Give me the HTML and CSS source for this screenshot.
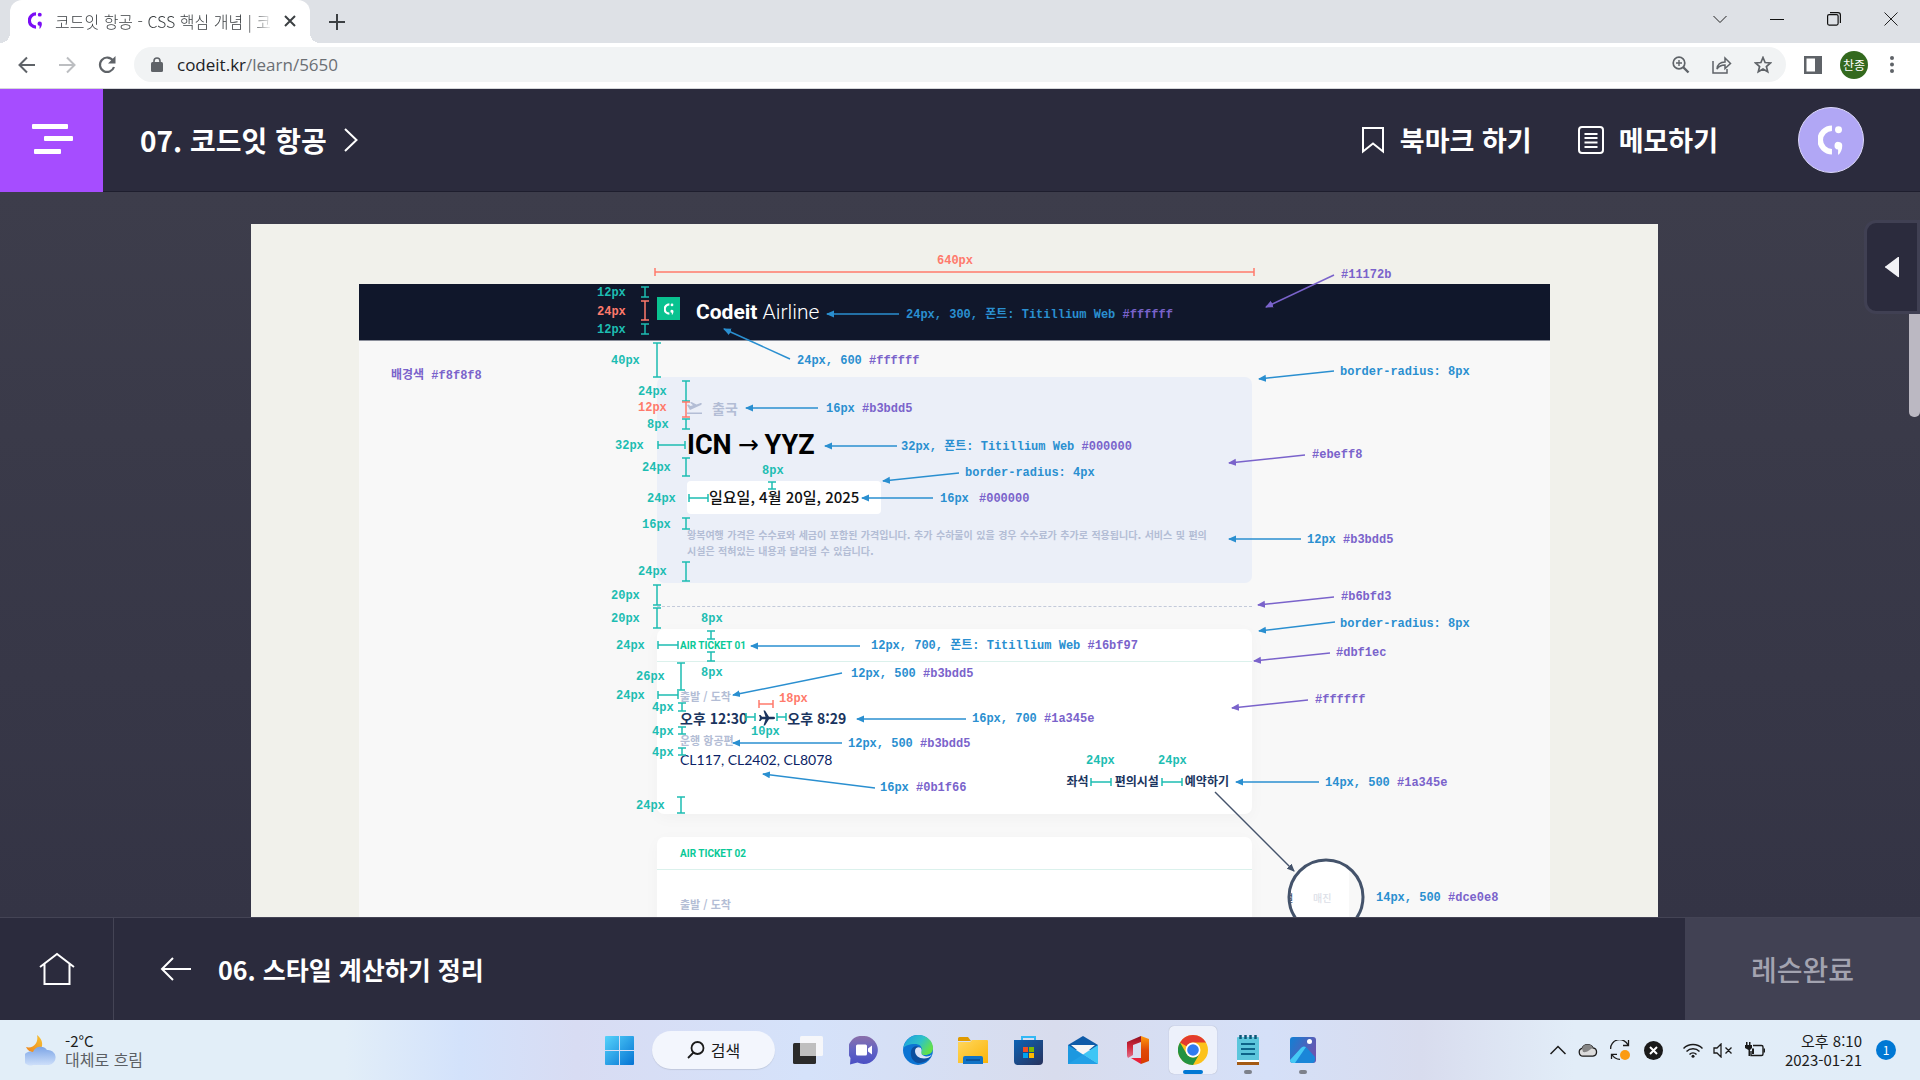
FILE: index.html
```html
<!DOCTYPE html>
<html lang="ko">
<head>
<meta charset="utf-8">
<meta name="viewport" content="width=device-width, initial-scale=1">
<title>코드잇 항공 - CSS 핵심 개념 | 코드잇</title>
<link rel="stylesheet" href="styles.css">
</head>
<body>
<svg class="defs" aria-hidden="true">
  <defs>
    <symbol id="codeit" viewBox="0 0 24 32">
      <path d="M13 3.500A12 12 0 0 0 13 28.500" fill="none" stroke="currentColor" stroke-width="6"/>
      <circle cx="20" cy="5" r="3.700" fill="currentColor"/>
      <path d="M20 18a4 4 0 0 1 4 4c0 4-1.500 7-4 10-1-2 0-4-.5-6a4 4 0 0 1 .5-8z" fill="currentColor"/>
    </symbol>
    <linearGradient id="winG" x1="0" y1="0" x2="1" y2="1"><stop offset="0" stop-color="#55d3fb"/><stop offset="1" stop-color="#0573d3"/></linearGradient>
    <linearGradient id="cloudG" x1="0" y1="0" x2="0" y2="1"><stop offset="0" stop-color="#7ba4e6"/><stop offset="1" stop-color="#cfe0fa"/></linearGradient>
    <linearGradient id="moonG" x1="1" y1="0" x2="0" y2="1"><stop offset="0" stop-color="#f7c331"/><stop offset="1" stop-color="#ee8420"/></linearGradient>
    <linearGradient id="chatG" x1="0" y1="0" x2="0" y2="1"><stop offset="0" stop-color="#8b6fa9"/><stop offset=".5" stop-color="#6264c4"/><stop offset="1" stop-color="#4a4fc4"/></linearGradient>
    <linearGradient id="edgeG" x1="0" y1="0" x2="1" y2=".5"><stop offset="0" stop-color="#1b9de2"/><stop offset=".6" stop-color="#2fc3c6"/><stop offset="1" stop-color="#62e04c"/></linearGradient>
    <linearGradient id="foldG" x1="0" y1="0" x2="1" y2="1"><stop offset="0" stop-color="#ffd75e"/><stop offset="1" stop-color="#fbb408"/></linearGradient>
    <linearGradient id="storeG" x1="0" y1="0" x2="1" y2="1"><stop offset="0" stop-color="#0d63b5"/><stop offset="1" stop-color="#28325c"/></linearGradient>
    <linearGradient id="photoG" x1="0" y1="0" x2="1" y2=".5"><stop offset="0" stop-color="#1180d4"/><stop offset="1" stop-color="#6a55b0"/></linearGradient>
    <linearGradient id="officeG" x1="0" y1="0" x2="0" y2="1"><stop offset="0" stop-color="#8f1020"/><stop offset=".5" stop-color="#d3283c"/><stop offset="1" stop-color="#e0708e"/></linearGradient>
    <linearGradient id="officeR" x1="0" y1="0" x2="0" y2="1"><stop offset="0" stop-color="#ff9a0c"/><stop offset=".5" stop-color="#e04a08"/><stop offset="1" stop-color="#d83b01"/></linearGradient>
  </defs>
</svg>

<div class="tabstrip">
  <div class="tab">
    <svg class="tab-logo" width="15" height="17"><use href="#codeit"/></svg>
    <span class="tab-title">코드잇 항공 - CSS 핵심 개념 | 코</span>
    <button class="plain" aria-label="탭 닫기"><svg width="12" height="12" viewBox="0 0 12 12" fill="none" stroke="#3c4043" stroke-width="2"><path d="M1 1l10 10M11 1L1 11"/></svg></button>
  </div>
  <button class="plain new-tab" aria-label="새 탭"><svg width="16" height="16" viewBox="0 0 16 16" stroke="#3c4043" stroke-width="2"><path d="M8 0v16M0 8h16"/></svg></button>
  <div class="window-controls">
    <button class="plain" aria-label="탭 검색"><svg width="14" height="14" viewBox="0 0 14 14" fill="none" stroke="#222"><path d="M.5 4L7 10.500 13.500 4"/></svg></button>
    <button class="plain" aria-label="최소화"><svg width="14" height="14" viewBox="0 0 14 14" stroke="#111"><path d="M0 7.500h14"/></svg></button>
    <button class="plain" aria-label="복원"><svg width="14" height="14" viewBox="0 0 14 14" fill="none" stroke="#111" stroke-width="1.200"><rect x=".6" y="2.600" width="10.500" height="10.500" rx="1.500"/><path d="M3 .6h8a2.400 2.400 0 0 1 2.400 2.400v8"/></svg></button>
    <button class="plain" aria-label="닫기"><svg width="14" height="14" viewBox="0 0 14 14" stroke="#222"><path d="M.5.500l13 13M13.500.500l-13 13"/></svg></button>
  </div>
</div>

<div class="toolbar">
  <button class="plain" aria-label="뒤로"><svg width="18" height="18" viewBox="0 0 18 18" fill="none" stroke="#5f6368" stroke-width="2"><path d="M17 9H2M9 1.500L1.500 9 9 16.500"/></svg></button>
  <button class="plain" aria-label="앞으로"><svg width="18" height="18" viewBox="0 0 18 18" fill="none" stroke="#bcbec1" stroke-width="2"><path d="M1 9h15M9 1.500L16.500 9 9 16.500"/></svg></button>
  <button class="plain" aria-label="새로고침"><svg width="18" height="18" viewBox="0 0 18 18"><path d="M15 4.500A7.200 7.200 0 1 0 16 11" fill="none" stroke="#5f6368" stroke-width="2.200"/><path d="M17.500 0v7.500H10z" fill="#5f6368"/></svg></button>
  <div class="omnibox">
    <svg width="12" height="15" viewBox="0 0 12 15"><rect y="5" width="12" height="10" rx="1.500" fill="#5f6368"/><path d="M3 6V4a3 3 0 0 1 6 0v2" fill="none" stroke="#5f6368" stroke-width="1.600"/></svg>
    <span class="url">codeit.kr<span class="path">/learn/5650</span></span>
    <button class="plain" aria-label="확대/축소"><svg width="18" height="18" viewBox="0 0 18 18" fill="none" stroke="#5f6368" stroke-width="1.700"><circle cx="7" cy="7" r="5.800"/><path d="M11 11l5.500 5.500" stroke-width="2.400"/><path d="M7 4v6M4 7h6" stroke-width="1.400"/></svg></button>
    <button class="plain" aria-label="공유"><svg width="20" height="18" viewBox="0 0 20 18" fill="none" stroke="#5f6368" stroke-width="1.500"><path d="M1 5v12h14v-4"/><path d="M5 13c.5-5 3.500-7 8-7V2l5.500 5.500L13 12.500V9c-4 0-6 1-8 4z"/></svg></button>
    <button class="plain" aria-label="북마크 추가"><svg width="18" height="18" viewBox="0 0 18 18" fill="none" stroke="#5f6368" stroke-width="1.700"><path d="M9 1.500l2.100 5 5.400.500-4.100 3.500 1.300 5.300L9 13l-4.700 2.800 1.300-5.300L1.500 7l5.400-.5z"/></svg></button>
  </div>
  <button class="plain" aria-label="사이드 패널"><svg width="18" height="18" viewBox="0 0 18 18"><path d="M0 0h18v18H0zM2.500 2.500v13H11v-13z" fill="#5f6368" fill-rule="evenodd"/></svg></button>
  <button class="profile">찬종</button>
  <button class="plain" aria-label="메뉴"><svg width="4" height="17" viewBox="0 0 4 17" fill="#5f6368"><circle cx="2" cy="2" r="2"/><circle cx="2" cy="8.500" r="2"/><circle cx="2" cy="15" r="2"/></svg></button>
</div>

<header class="lesson-header">
  <button class="menu" aria-label="목차"><svg width="42" height="32" viewBox="0 0 42 32" fill="#fff"><rect x="1" width="36" height="5" rx="1"/><rect x="13" y="12" width="29" height="5" rx="1"/><rect x="3" y="25" width="27" height="5" rx="1"/></svg></button>
  <a class="chapter" href="#">07. 코드잇 항공 <svg width="14" height="24" viewBox="0 0 14 24" fill="none" stroke="#fff" stroke-width="2"><path d="M1 1l11.500 11L1 23"/></svg></a>
  <div class="lesson-tools">
    <button class="tool"><svg width="24" height="28" viewBox="0 0 24 28" fill="none" stroke="#fff" stroke-width="2"><path d="M2 2h20v23.500L12 17.500 2 25.500z"/></svg>북마크 하기</button>
    <button class="tool"><svg width="26" height="28" viewBox="0 0 26 28" fill="none" stroke="#fff" stroke-width="2"><rect x="1" y="1" width="24" height="26" rx="3"/><path d="M6.500 8h13M6.500 12h13M6.500 16.500h13M6.500 21h13"/></svg>메모하기</button>
    <button class="avatar" aria-label="내 프로필"><svg width="26" height="30"><use href="#codeit"/></svg></button>
  </div>
</header>

<main class="lesson">
  <figure class="sheet">
    <div class="site">
      <div class="site-header">
        <div class="site-column brand">
          <span class="brand-mark"><svg width="10" height="12"><use href="#codeit"/></svg></span>
          <span class="brand-name"><b>Codeit</b> Airline</span>
        </div>
      </div>
      <div class="site-column site-body">
        <section class="trip">
          <div class="trip-kind"><svg width="15" height="12" viewBox="0 0 15 12" fill="#b3bdd5"><path d="M0 10.500h15V12H0zM0 3l1.500-.5 2 1.500 2.500-.8L3 .5 4.500 0l5 2.500L13 1.200c2-.5 2.500 1 1 1.700L3 8z"/></svg>출국</div>
          <div class="route">ICN <span class="to">→</span> YYZ</div>
          <div class="date">일요일, 4월 20일, 2025</div>
          <p class="notice">왕복여행 가격은 수수료와 세금이 포함된 가격입니다. 추가 수하물이 있을 경우 수수료가 추가로 적용됩니다. 서비스 및 편의<br>시설은 적혀있는 내용과 달라질 수 있습니다.</p>
        </section>
        <hr class="cut">
        <article class="ticket">
          <h2>AIR TICKET 01</h2>
          <div class="ticket-body">
            <p class="caption">출발 / 도착</p>
            <p class="times"><span>오후 12:30</span><svg width="16" height="16" viewBox="0 0 16 16" fill="#1a345e"><path d="M16 8c0 .8-.7 1.200-1.500 1.200H10L6 15.500H4.500L6.500 9.200H3L1.500 11H0l1-3-1-3h1.500L3 6.800h3.500L4.500.500H6l4 6.300h4.500c.8 0 1.500.4 1.500 1.200z"/></svg><span>오후 8:29</span></p>
            <p class="caption">운행 항공편</p>
            <p class="flights">CL117, CL2402, CL8078</p>
            <nav class="actions"><a href="#">좌석</a><a href="#">편의시설</a><a href="#">예약하기</a></nav>
          </div>
        </article>
        <article class="ticket">
          <h2>AIR TICKET 02</h2>
          <div class="ticket-body">
            <p class="caption">출발 / 도착</p>
          </div>
        </article>
      </div>
    </div>

    <svg class="notes" width="1407" height="694" viewBox="251 224 1407 694">
      <defs>
        <marker id="barT" viewBox="0 0 2 8" refX="1" refY="4" markerWidth="2" markerHeight="8" markerUnits="userSpaceOnUse" orient="auto"><path d="M1 0v8" stroke="#1dbdb2" stroke-width="1.500"/></marker>
        <marker id="barC" viewBox="0 0 2 8" refX="1" refY="4" markerWidth="2" markerHeight="8" markerUnits="userSpaceOnUse" orient="auto"><path d="M1 0v8" stroke="#ff7a6b" stroke-width="1.500"/></marker>
        <marker id="tipB" viewBox="0 0 8 8" refX="7" refY="4" markerWidth="8" markerHeight="8" markerUnits="userSpaceOnUse" orient="auto"><path d="M0 .5L8 4 0 7.500z" fill="#2a8fd0"/></marker>
        <marker id="tipP" viewBox="0 0 8 8" refX="7" refY="4" markerWidth="8" markerHeight="8" markerUnits="userSpaceOnUse" orient="auto"><path d="M0 .5L8 4 0 7.500z" fill="#7a63cb"/></marker>
        <marker id="tipS" viewBox="0 0 8 8" refX="7" refY="4" markerWidth="8" markerHeight="8" markerUnits="userSpaceOnUse" orient="auto"><path d="M0 .5L8 4 0 7.500z" fill="#44536b"/></marker>
        <clipPath id="lens"><circle cx="1326" cy="897" r="37"/></clipPath>
      </defs>

      <g class="span-teal">
        <path d="M645 287V297"/><path d="M645 324V334"/><path d="M657 343V377"/>
        <path d="M686 381V401"/><path d="M686 419V429"/><path d="M658 445H685"/>
        <path d="M686 458V476"/><path d="M772 482V489"/><path d="M689 498H708"/>
        <path d="M686 518V529"/><path d="M686 562V581"/><path d="M657 585V605"/>
        <path d="M657 608V628"/><path d="M711 631V639"/><path d="M711 652V661"/>
        <path d="M658 645H678"/><path d="M681 663V690"/><path d="M658 695H678"/>
        <path d="M682 703V711"/><path d="M682 727V734"/><path d="M682 748V755"/>
        <path d="M746 717H755"/><path d="M777 717H786"/><path d="M681 797V813"/>
        <path d="M1091 782H1111"/><path d="M1162 782H1182"/>
      </g>
      <g class="span-coral">
        <path d="M655 272H1254"/><path d="M645 301V320"/><path d="M686 402V417"/><path d="M759 704H773"/>
      </g>
      <g class="arrow-blue">
        <path d="M899 314H827"/><path d="M790 359L724 329"/><path d="M818 408H746"/><path d="M897 446H825"/>
        <path d="M959 473L883 481"/><path d="M933 498H862"/><path d="M860 646H751"/><path d="M842 673L733 695"/>
        <path d="M966 719H857"/><path d="M842 743H733"/><path d="M875 788L763 774"/><path d="M1334 371L1259 379"/>
        <path d="M1301 539H1229"/><path d="M1335 622L1259 631"/><path d="M1319 782H1236"/>
      </g>
      <g class="arrow-purple">
        <path d="M1334 275L1266 307"/><path d="M1305 455L1229 463"/><path d="M1334 597L1258 605"/>
        <path d="M1330 653L1254 661"/><path d="M1308 700L1232 708"/>
      </g>
      <path class="arrow-slate" d="M1215 792L1294 871"/>

      <g clip-path="url(#lens)">
        <rect x="1288" y="859" width="61" height="76" fill="#fff"/>
        <rect x="1349" y="859" width="20" height="76" fill="#f8f8f8"/>
        <text class="lens-dark" x="1284" y="902">설</text>
        <text class="lens-pale" x="1313" y="902">매진</text>
      </g>
      <circle cx="1326" cy="897" r="37" fill="none" stroke="#44536b" stroke-width="3"/>

      <g class="teal">
        <text x="597" y="296">12px</text><text x="597" y="333">12px</text><text x="611" y="364">40px</text>
        <text x="638" y="395">24px</text><text x="647" y="428">8px</text><text x="615" y="449">32px</text>
        <text x="642" y="471">24px</text><text x="762" y="474">8px</text><text x="647" y="502">24px</text>
        <text x="642" y="528">16px</text><text x="638" y="575">24px</text><text x="611" y="599">20px</text>
        <text x="611" y="622">20px</text><text x="701" y="622">8px</text><text x="616" y="649">24px</text>
        <text x="701" y="676">8px</text><text x="636" y="680">26px</text><text x="616" y="699">24px</text>
        <text x="652" y="711">4px</text><text x="652" y="735">4px</text><text x="652" y="756">4px</text>
        <text x="751" y="735">10px</text><text x="636" y="809">24px</text>
        <text x="1086" y="764">24px</text><text x="1158" y="764">24px</text>
      </g>
      <g class="coral">
        <text x="937" y="264">640px</text><text x="597" y="315">24px</text><text x="638" y="411">12px</text><text x="779" y="702">18px</text>
      </g>
      <g class="blue">
        <text x="906" y="318">24px, 300, 폰트: Titillium Web <tspan class="hex">#ffffff</tspan></text>
        <text x="797" y="364">24px, 600 <tspan class="hex">#ffffff</tspan></text>
        <text x="826" y="412">16px <tspan class="hex">#b3bdd5</tspan></text>
        <text x="901" y="450">32px, 폰트: Titillium Web <tspan class="hex">#000000</tspan></text>
        <text x="965" y="476">border-radius: 4px</text>
        <text x="940" y="502">16px <tspan class="hex" x="979">#000000</tspan></text>
        <text x="871" y="649">12px, 700, 폰트: Titillium Web <tspan class="hex">#16bf97</tspan></text>
        <text x="851" y="677">12px, 500 <tspan class="hex">#b3bdd5</tspan></text>
        <text x="848" y="747">12px, 500 <tspan class="hex">#b3bdd5</tspan></text>
        <text x="972" y="722">16px, 700 <tspan class="hex">#1a345e</tspan></text>
        <text x="880" y="791">16px <tspan class="hex">#0b1f66</tspan></text>
        <text x="1340" y="375">border-radius: 8px</text>
        <text x="1307" y="543">12px <tspan class="hex">#b3bdd5</tspan></text>
        <text x="1340" y="627">border-radius: 8px</text>
        <text x="1325" y="786">14px, 500 <tspan class="hex">#1a345e</tspan></text>
        <text x="1376" y="901">14px, 500 <tspan class="hex">#dce0e8</tspan></text>
      </g>
      <g class="hex">
        <text x="391" y="379">배경색 #f8f8f8</text>
        <text x="1341" y="278">#11172b</text><text x="1312" y="458">#ebeff8</text><text x="1341" y="600">#b6bfd3</text>
        <text x="1336" y="656">#dbf1ec</text><text x="1315" y="703">#ffffff</text>
      </g>
    </svg>
  </figure>
  <button class="drawer" aria-label="패널 열기"><svg width="14" height="22" viewBox="0 0 14 22"><path d="M14 1v20a1 1 0 0 1-1 0L1 12a1 1 0 0 1 0-2L13 1z" fill="#f2f2f6"/></svg></button>
  <div class="scroll-thumb"></div>
</main>

<footer class="lesson-footer">
  <a class="home" href="#" aria-label="홈"><svg width="36" height="34" viewBox="0 0 36 34" fill="none" stroke="#fff" stroke-width="2"><path d="M1 15L18 2l17 13M5.500 12v20h25V12"/></svg></a>
  <a class="previous" href="#"><svg width="32" height="24" viewBox="0 0 32 24" fill="none" stroke="#fff" stroke-width="2"><path d="M31 12H2M13 1L2 12l11 11"/></svg>06. 스타일 계산하기 정리</a>
  <button class="complete">레슨완료</button>
</footer>

<div class="taskbar">
  <div class="weather">
    <svg width="32" height="32" viewBox="0 0 32 32"><path d="M12 1c6 4 7 12 2 16C9 20 3 18 1 13c7 2 13-4 11-12z" fill="url(#moonG)"/><path d="M8 31a7 7 0 1 1 0-13 8 8 0 0 1 14-2 7.500 7.500 0 1 1 2 15z" fill="url(#cloudG)"/></svg>
    <div>-2°C<br><span class="sky">대체로 흐림</span></div>
  </div>
  <div class="apps">
    <button class="app" aria-label="시작"><svg width="29" height="29" viewBox="0 0 29 29" fill="url(#winG)"><path d="M0 1a1 1 0 0 1 1-1h13v14H0zM15 0h13a1 1 0 0 1 1 1v13H15zM0 15h14v14H1a1 1 0 0 1-1-1zM15 15h14v13a1 1 0 0 1-1 1H15z"/></svg></button>
    <button class="search"><svg width="18" height="18" viewBox="0 0 18 18" fill="none" stroke="#1b1b1b" stroke-width="1.800"><circle cx="10.500" cy="7" r="6"/><path d="M6.500 11.500L1 17"/></svg>검색</button>
    <button class="app" aria-label="작업 보기"><svg width="30" height="28" viewBox="0 0 30 28"><rect y="7" width="23" height="21" rx="1.500" fill="#2b2b2b"/><rect x="7" width="23" height="20" rx="1.500" fill="#fafafa" opacity=".9"/><path d="M7 7h16v13H7z" fill="#bfbfbf"/></svg></button>
    <button class="app" aria-label="채팅"><svg width="29" height="29" viewBox="0 0 29 29"><path d="M14.500 0a14 14 0 1 1-6 26.500L1 28.500 1.500 22A14 14 0 0 1 14.500 0z" fill="url(#chatG)"/><rect x="7" y="8.500" width="11" height="11" rx="1.500" fill="#fff"/><path d="M19 12.500l4-3v9l-4-3z" fill="#fff"/></svg></button>
    <button class="app" aria-label="Edge"><svg width="30" height="30" viewBox="0 0 30 30"><circle cx="15" cy="15" r="15" fill="#0c74d3"/><path d="M.5 13C2 4 9 0 15 0c9 0 15 6 15 13 0 5-4 7-8 7-4 0-5-2-3-5 0-4-3-6-7-6C6 9 2 11 .5 13z" fill="url(#edgeG)"/><path d="M8 16c1-5 6-6 9-3-3 3 0 9 6 9 2 0 4-.5 5-1-3 6-9 7-13 7-5-1-8-6-7-12z" fill="#0d4f9e"/><path d="M12 16c0-3 3-5 6-3 0 1 1 1.500.5 3-1 3 1 5 5 5.500 2 0 4-1 5.500-2-2 3-5 4-8 4-5 0-9-3-9-7.500z" fill="#dbe3f7"/></svg></button>
    <button class="app" aria-label="파일 탐색기"><svg width="30" height="27" viewBox="0 0 30 27"><path d="M0 1.500A1.500 1.500 0 0 1 1.500 0H10l3 4H0z" fill="#e09a00"/><path d="M0 5h12l2-2h15a1 1 0 0 1 1 1v22H0z" fill="url(#foldG)"/><path d="M5 27v-6a2 2 0 0 1 2-2h16a2 2 0 0 1 2 2v6z" fill="#1173c6"/><path d="M8 23h14" stroke="#0a4a8c" stroke-width="1.500"/></svg></button>
    <button class="app" aria-label="스토어"><svg width="29" height="29" viewBox="0 0 29 29"><path d="M8 6V1h13v5" fill="none" stroke="#32b8f5" stroke-width="2"/><path d="M0 4h29v21a4 4 0 0 1-4 4H4a4 4 0 0 1-4-4z" fill="url(#storeG)"/><path d="M9 11h5v5H9z" fill="#f25022"/><path d="M15 11h5v5h-5z" fill="#7fba00"/><path d="M9 17h5v5H9z" fill="#00a4ef"/><path d="M15 17h5v5h-5z" fill="#ffb900"/></svg></button>
    <button class="app" aria-label="메일"><svg width="30" height="28" viewBox="0 0 30 28"><path d="M0 9L15 0l15 9v5H0z" fill="#0f5ba8"/><path d="M3 9h24L15 19z" fill="#f6f6f6"/><path d="M0 9l30 19H0z" fill="#1c98e0"/><path d="M30 9v19L15 18.500z" fill="#3fc6f5"/><path d="M0 28l15-9.500L30 28z" fill="#22a0e6"/></svg></button>
    <button class="app" aria-label="Office"><svg width="23" height="28" viewBox="0 0 23 28"><path d="M0 6L14 0v6l-8 3v10l-5 3-1-2z" fill="url(#officeG)"/><path d="M14 0l8 3v22l-8 3z" fill="url(#officeR)"/><path d="M4 22h10v6z" fill="#e8203a"/></svg></button>
    <button class="app active" aria-label="Chrome"><svg width="30" height="30" viewBox="0 0 30 30"><circle cx="15" cy="15" r="15" fill="#fcc21c"/><path d="M15 0a15 15 0 0 1 13 7.500H15a7.500 7.500 0 0 0-6.500 3.700L2 7.500A15 15 0 0 1 15 0z" fill="#e33b2e"/><path d="M2 7.500l6.500 11.200A7.500 7.500 0 0 0 15 22.500a7 7 0 0 0 6.500-3.700L15 30A15 15 0 0 1 2 7.500z" fill="#229342"/><circle cx="15" cy="15" r="7.500" fill="#fff"/><circle cx="15" cy="15" r="5.800" fill="#2f7bf0"/></svg></button>
    <button class="app open" aria-label="메모장"><svg width="22" height="30" viewBox="0 0 22 30"><path d="M0 26h22v4H0z" fill="#a35a14"/><path d="M0 3a1 1 0 0 1 1-1h20a1 1 0 0 1 1 1v22H0z" fill="#5cc6dc"/><path d="M0 25h22v2H0z" fill="#fff"/><path d="M4 9h14M4 14h14M4 19h14" stroke="#0d6489" stroke-width="2"/><path d="M3.500 0v4M8.500 0v4M13.500 0v4M18.500 0v4" stroke="#0d5878" stroke-width="2.500"/></svg></button>
    <button class="app open" aria-label="사진"><svg width="26" height="26" viewBox="0 0 26 26"><rect width="26" height="26" rx="3" fill="url(#photoG)"/><path d="M1 24L11 11q3-3 6 0l8 9v3a3 3 0 0 1-3 3H3a3 3 0 0 1-2-2z" fill="#1a86d8"/><path d="M0 23L11 11q2-2.500 5-1L5 26H3a3 3 0 0 1-3-3z" fill="#45c9f5"/><circle cx="19.500" cy="4.500" r="2.500" fill="#fff"/></svg></button>
  </div>
  <div class="tray">
    <svg width="16" height="10" viewBox="0 0 16 10" fill="none" stroke="#1b1b1b" stroke-width="1.500"><path d="M.5 9L8 1.500 15.500 9"/></svg>
    <svg width="20" height="14" viewBox="0 0 20 14"><path d="M5 13.200a4 4 0 0 1-1-7.800 6 6 0 0 1 11-.5 4.200 4.200 0 0 1 0 8.300z" fill="#dcdcdc" stroke="#1b1b1b" stroke-width="1.300"/><path d="M4 5.400a6 6 0 0 1 11-.5C12 6 9 10 5 9z" fill="#858585"/></svg>
    <svg class="sync" width="20" height="20" viewBox="0 0 20 20" fill="none" stroke="#1b1b1b" stroke-width="1.300"><path d="M.7 9A9 8.500 0 0 1 18 5M18.500 0v5.500H13M10 19.300a9 9 0 0 1-8-4.800M1.500 19v-4.700H7"/><circle cx="15" cy="15" r="5" fill="#fb9b12" stroke="none"/></svg>
    <svg width="19" height="19" viewBox="0 0 19 19"><circle cx="9.500" cy="9.500" r="9.500" fill="#1a1a1a"/><path d="M6 6l7 7M13 6l-7 7" stroke="#fff" stroke-width="2"/></svg>
    <svg class="wifi" width="20" height="15" viewBox="0 0 20 15" fill="none" stroke="#1b1b1b" stroke-width="1.500"><path d="M.5 5.500a13.500 13.500 0 0 1 19 0M3.500 8.500a9.200 9.200 0 0 1 13 0M6.500 11.500a5 5 0 0 1 7 0"/><circle cx="10" cy="13.300" r="1.500" fill="#1b1b1b" stroke="none"/></svg>
    <svg width="20" height="15" viewBox="0 0 20 15" fill="none" stroke="#1b1b1b" stroke-width="1.300"><path d="M1 5h3l4-4v13l-4-4H1zM12.500 4.500l6 6M18.500 4.500l-6 6"/></svg>
    <svg width="20" height="16" viewBox="0 0 20 16"><path d="M8 3.500h8.500a1.500 1.500 0 0 1 1.500 1.500v7a1.500 1.500 0 0 1-1.500 1.500H6V9" fill="none" stroke="#1b1b1b" stroke-width="1.400"/><path d="M0 3h1V0h1.500v3H4V0h1.500v3H7v3L5 8v6H3.500V8L0 6zM7 6.500h2V12H7zM18.500 6.500H20v4h-1.500z" fill="#1b1b1b"/></svg>
    <div class="clock">오후 8:10<br>2023-01-21</div>
    <span class="badge">1</span>
  </div>
</div>
</body>
</html>
```
FILE: styles.css
```css
* { box-sizing: border-box; }

body {
  margin: 0;
  height: 100vh;
  display: flex;
  flex-direction: column;
  overflow: hidden;
  font-family: "Noto Sans CJK KR", "Noto Sans", sans-serif;
  background: #fff;
}

button { font: inherit; color: inherit; border: 0; padding: 0; margin: 0; background: none; }
a { color: inherit; text-decoration: none; }
svg { flex: none; display: block; }
p, h2, figure { margin: 0; }
.defs { position: absolute; width: 0; height: 0; }
.plain { display: flex; align-items: center; justify-content: center; flex: none; }

/* browser window */
.tabstrip { flex: none; height: 43px; display: flex; background: #dee1e6; padding-left: 10px; }
.tab {
  position: relative;
  width: 300px;
  display: flex;
  align-items: center;
  gap: 12px;
  padding: 0 14px 2px 18px;
  background: #fff;
  border-radius: 12px 12px 0 0;
}
.tab::before, .tab::after {
  content: "";
  position: absolute;
  bottom: 0;
  width: 10px;
  height: 10px;
}
.tab::before { right: 100%; background: radial-gradient(circle at 0 0, transparent 10px, #fff 10px); }
.tab::after { left: 100%; background: radial-gradient(circle at 100% 0, transparent 10px, #fff 10px); }
.tab-logo { color: #7a0df5; }
.tab-title {
  flex: 1;
  min-width: 0;
  white-space: nowrap;
  font-size: 16px;
  line-height: 24px;
  color: #3c4043;
  font-weight: 300;
  mask-image: linear-gradient(to right, #000 92%, transparent);
}
.new-tab { width: 54px; }
.window-controls { margin-left: auto; margin-right: 1px; display: flex; height: 37px; }
.window-controls .plain { width: 57px; }

.toolbar {
  flex: none;
  height: 46px;
  display: flex;
  align-items: center;
  gap: 22px;
  padding: 0 26px 2px 18px;
  border-bottom: 1px solid #d5d7da;
}
.omnibox {
  flex: 1;
  height: 35px;
  display: flex;
  align-items: center;
  gap: 22px;
  padding: 0 14px 0 17px;
  margin-right: -4px;
  margin-left: -4px;
  border-radius: 18px;
  background: #f1f3f4;
}
.url { flex: 1; margin-left: -8px; font: 17px/24px "Open Sans", sans-serif; color: #202124; }
.path { color: #6b6f74; }
.profile { width: 28px; height: 28px; margin-left: -4px; border-radius: 50%; background: #33691e; color: #fff; font-size: 12px; line-height: 28px; white-space: nowrap; }

/* lesson chrome */
.lesson-header {
  flex: none;
  height: 103px;
  display: flex;
  align-items: center;
  background: #2b2b3d;
  border-bottom: 1px solid #1e1e2e;
  color: #fff;
  font-size: 28px;
  line-height: 40px;
  font-weight: 700;
}
.menu { width: 103px; height: 103px; background: #a64dff; display: flex; align-items: center; justify-content: center; }
.chapter { display: flex; align-items: center; gap: 17px; margin-left: 37px; }
.lesson-tools { margin-left: auto; margin-right: 56px; display: flex; align-items: center; gap: 46px; }
.tool { display: flex; align-items: center; gap: 15px; white-space: nowrap; font-size: 27px; }
.avatar { width: 66px; height: 66px; margin-left: 34px; border-radius: 50%; background: #b1a7f5; border: 1px solid #dcd8fa; display: flex; align-items: center; justify-content: center; }

.lesson {
  position: relative;
  flex: 1;
  min-height: 0;
  overflow: hidden;
  padding: 32px 11px 0 0;
  background: linear-gradient(#3d3d4b, #343445);
}
.drawer {
  position: absolute;
  top: 28px;
  right: 0;
  width: 56px;
  height: 94px;
  display: flex;
  align-items: center;
  justify-content: center;
  background: #2b2b3d;
  border: 3px solid #404053;
  border-radius: 12px 0 0 12px;
}
.scroll-thumb { position: absolute; top: 122px; right: 0; width: 11px; height: 103px; background: #bbb8c2; border-radius: 0 0 5px 5px; }

.lesson-footer {
  flex: none;
  height: 103px;
  display: flex;
  background: #2b2b3d;
  border-top: 1px solid #444455;
  color: #fff;
  font-size: 25px;
  line-height: 40px;
  font-weight: 700;
}
.home { width: 114px; border-right: 1px solid #444455; display: flex; align-items: center; justify-content: center; }
.previous { display: flex; align-items: center; gap: 26px; margin-left: 46px; }
.complete { margin-left: auto; width: 235px; background: #414153; color: #a3a3b0; font-size: 28px; font-weight: 500; }

/* design sheet */
.sheet { position: relative; width: 1407px; margin: 0 auto; padding: 60px 108px; background: #f1f1eb; }
.site { background: #f8f8f8; padding-bottom: 60px; }
.site-column { width: 595px; margin: 0 auto; }
.site-header { background: #10172b; border-bottom: 1px solid #8b8f9b; }
.brand { display: flex; gap: 16px; height: 56px; padding-top: 13px; color: #fff; }
.brand-mark { width: 23px; height: 23px; background: #09c290; display: flex; align-items: center; justify-content: center; }
.brand-name { font: 300 21px/30px Roboto, sans-serif; }
.brand-name b { font-weight: 700; }
.site-body { padding-top: 36px; }

.trip { padding: 21px 0 23px 30px; border-radius: 7px; background: #ebeff8; }
.trip-kind { display: flex; align-items: center; gap: 10px; font-size: 14px; line-height: 20px; font-weight: 700; color: #b3bdd5; }
.route { margin-top: 11px; display: flex; gap: 6px; font: 700 27px/32px Roboto, sans-serif; color: #000; }
.to { font: 25px/32px "DejaVu Sans", sans-serif; }
.date { margin-top: 20px; width: fit-content; padding: 0 22px 2px; font-size: 15px; line-height: 31px; font-weight: 500; color: #111; background: #fff; border-radius: 4px; }
.notice { margin-top: 14px; font: 700 10px/16px "DejaVu Sans", "Noto Sans CJK KR", sans-serif; color: #b3bdd5; white-space: nowrap; }
.cut { margin: 23px 0 22px; border: 0; border-top: 1px dashed #c3cada; }

.ticket { margin-bottom: 23px; border-radius: 7px; background: #fff; box-shadow: 0 4px 16px rgba(0, 0, 0, 0.03); }
.ticket h2 { padding: 2px 0 0 23px; font: 700 10px/30px Roboto, sans-serif; color: #09c997; border-bottom: 1px solid #dbf1ec; }
.ticket-body { padding: 26px 23px 24px; }
.caption { font-size: 11px; line-height: 16px; font-weight: 700; color: #b3bdd5; }
.times { display: flex; align-items: center; gap: 12px; margin: 3px 0; font-size: 14px; line-height: 22px; font-weight: 700; color: #1a345e; }
.flights { font: 14px/24px Lato, sans-serif; color: #0b1f66; }
.actions { display: flex; justify-content: flex-end; gap: 26px; font-size: 12px; line-height: 18px; font-weight: 700; color: #1a345e; }

/* measurement notes laid over the sheet */
.notes { position: absolute; top: 0; left: 0; font: 700 12px "Liberation Mono", "Noto Sans CJK KR", monospace; }
.span-teal, .span-coral, .arrow-blue, .arrow-purple, .arrow-slate { fill: none; stroke-width: 1.5px; }
.span-teal { stroke: #1dbdb2; }
.span-teal path { marker-start: url(#barT); marker-end: url(#barT); }
.span-coral { stroke: #ff7a6b; }
.span-coral path { marker-start: url(#barC); marker-end: url(#barC); }
.arrow-blue { stroke: #2a8fd0; }
.arrow-blue path { marker-end: url(#tipB); }
.arrow-purple { stroke: #7a63cb; }
.arrow-purple path { marker-end: url(#tipP); }
.arrow-slate { stroke: #44536b; marker-end: url(#tipS); }
.teal { fill: #1dbdb2; }
.coral { fill: #ff7a6b; }
.blue { fill: #2a8fd0; }
.hex { fill: #7a63cb; }
.lens-dark, .lens-pale { font: 500 10px "Noto Sans CJK KR", sans-serif; }
.lens-dark { fill: #44536b; }
.lens-pale { fill: #dce0e8; }

/* desktop taskbar */
.taskbar {
  flex: none;
  height: 60px;
  display: grid;
  grid-template-columns: 1fr auto 1fr;
  align-items: center;
  background: linear-gradient(90deg, #e2eef8 0, #e2eef8 18%, #d3e2fb 24%, #d8dcf3 30%, #d5e2fa 42%, #d8dced 55%, #d5e0f8 66%, #d8dcee 74%, #e2edf8 82%, #e1edf8 100%);
  color: #1b1b1b;
  font-size: 15px;
  line-height: 19px;
}
.weather { display: flex; align-items: center; gap: 8px; padding-left: 25px; }
.sky { color: #5b5f64; font-size: 16px; }
.apps { display: flex; align-items: center; gap: 7px; padding-left: 2px; }
.app { position: relative; width: 48px; height: 48px; border-radius: 5px; display: flex; align-items: center; justify-content: center; }
.active { background: #edf1fb; box-shadow: 0 0 1px rgba(0, 0, 0, 0.3); }
.active::after, .open::after { content: ""; position: absolute; bottom: 0; left: 20px; width: 8px; height: 4px; border-radius: 2px; background: #7d818b; }
.active::after { left: 14px; width: 20px; background: #0078d4; }
.search { width: 123px; height: 38px; margin: 0 2px; border-radius: 19px; background: #f3f6fd; display: flex; align-items: center; justify-content: center; gap: 6px; font-size: 16px; box-shadow: 0 1px 1px rgba(0, 0, 0, 0.1); }
.tray { display: flex; align-items: center; justify-content: flex-end; gap: 12px; padding-right: 24px; }
.sync { margin-right: 2px; }
.wifi { margin-left: 8px; margin-right: -2px; }
.clock { text-align: right; margin-left: 8px; }
.badge { width: 20px; height: 20px; margin-left: 2px; border-radius: 50%; background: #0078d4; color: #fff; font-size: 12px; line-height: 20px; text-align: center; }
```
